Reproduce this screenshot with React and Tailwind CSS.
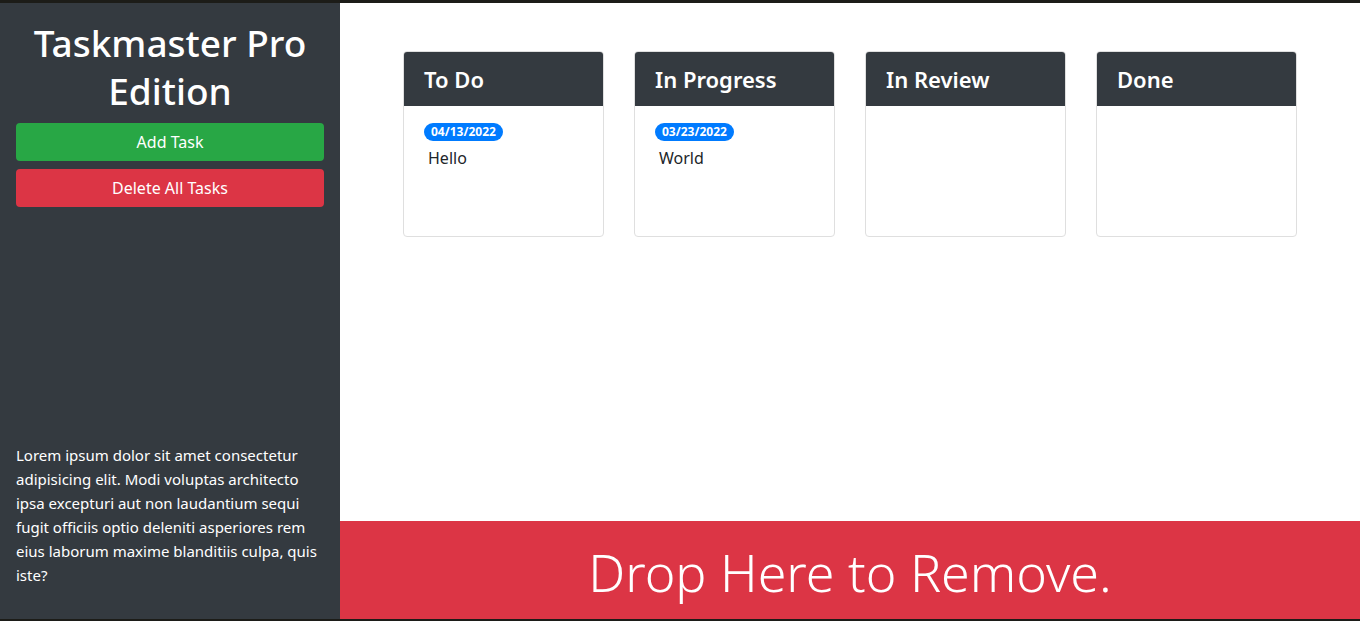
import React from "react";

const FONT = { fontFamily: '"Noto Sans", "Open Sans", sans-serif' };

const lists = [
  { title: "To Do", tasks: [{ date: "04/13/2022", text: "Hello" }] },
  { title: "In Progress", tasks: [{ date: "03/23/2022", text: "World" }] },
  { title: "In Review", tasks: [] },
  { title: "Done", tasks: [] },
];

function TaskList({ title, tasks }) {
  return (
    <div className="w-[201px] h-[186px] border border-[#dfdfdf] rounded-[4px] overflow-hidden bg-white">
      <div className="bg-[#343a40] h-[54px] px-5 flex items-center">
        <h3 className="text-white text-[22px] font-semibold leading-none">{title}</h3>
      </div>
      <ul className="px-5 pt-[12px]">
        {tasks.map((t) => (
          <li key={t.date} className="mb-2">
            <span className="inline-block bg-[#007bff] text-white text-[12px] font-bold leading-none rounded-full px-[7px] py-[3px]">
              {t.date}
            </span>
            <p className="text-[#212529] text-[16px] leading-6 mt-[4px] ml-1">{t.text}</p>
          </li>
        ))}
      </ul>
    </div>
  );
}

export default function App() {
  return (
    <div className="h-[621px] bg-[#1c1c18] pt-[3px] pb-[2px]" style={FONT}>
      <div className="flex h-full">
        {/* sidebar */}
        <aside className="w-[340px] bg-[#343a40] px-4 pt-[16px] pb-[32px] flex flex-col">
          <h1 className="text-white text-[37px] font-medium leading-[48px] text-center mb-2">
            Taskmaster Pro Edition
          </h1>
          <button className="h-[38px] w-full bg-[#28a745] text-white text-[16px] rounded-[4px] mb-2">
            Add Task
          </button>
          <button className="h-[38px] w-full bg-[#dc3545] text-white text-[16px] rounded-[4px]">
            Delete All Tasks
          </button>
          <p className="mt-auto text-white text-[15px] leading-6">
            Lorem ipsum dolor sit amet consectetur adipisicing elit. Modi voluptas architecto ipsa
            excepturi aut non laudantium sequi fugit officiis optio deleniti asperiores rem eius
            laborum maxime blanditiis culpa, quis iste?
          </p>
        </aside>

        {/* main */}
        <main className="flex-1 bg-white flex flex-col">
          <div className="flex-1 flex gap-[30px] pt-[48px] pl-[63px]">
            {lists.map((l) => (
              <TaskList key={l.title} title={l.title} tasks={l.tasks} />
            ))}
          </div>
          <div className="h-[98px] bg-[#dc3545] flex items-center justify-center">
            <span className="text-white text-[52px] font-light leading-none mt-[3px]">Drop Here to Remove.</span>
          </div>
        </main>
      </div>
    </div>
  );
}
